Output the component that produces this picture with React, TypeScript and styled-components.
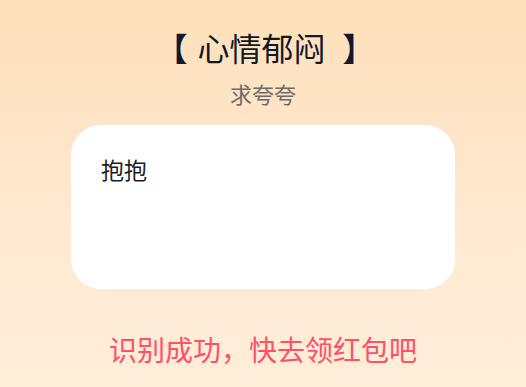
import React from 'react'
import styled, { createGlobalStyle } from 'styled-components'

const GlobalStyle = createGlobalStyle`
  html, body {
    margin: 0;
    padding: 0;
  }
  body {
    font-family: "Noto Sans CJK SC", "Noto Sans", sans-serif;
  }
`

const Page = styled.div`
  width: 526px;
  height: 387px;
  box-sizing: border-box;
  padding-top: 28px;
  background: linear-gradient(180deg, #fee0ba 0%, #ffe9d2 60%, #ffeed9 100%);
  display: flex;
  flex-direction: column;
  align-items: center;
  overflow: hidden;
`

const Title = styled.h1`
  margin: 0;
  display: flex;
  align-items: center;
  font-size: 32px;
  line-height: 38px;
  font-weight: 400;
  color: #111827;
  white-space: pre;
`

const Bracket = styled.span<{ $side: 'left' | 'right' }>`
  font-weight: 700;
  color: #0f1a2e;
  margin-left: ${p => (p.$side === 'left' ? '-10px' : '17px')};
  margin-right: ${p => (p.$side === 'left' ? '10px' : '-14px')};
`

const Subtitle = styled.div`
  margin-top: 13px;
  font-size: 22px;
  line-height: 28px;
  color: #6b6b6b;
`

const Card = styled.div`
  margin-top: 18px;
  width: 384px;
  height: 164px;
  box-sizing: border-box;
  padding: 28px 30px;
  background: #ffffff;
  border-radius: 30px;
`

const CardText = styled.div`
  font-size: 23px;
  line-height: 32px;
  color: #1c1c1c;
`

const Notice = styled.div`
  margin-top: 42px;
  font-size: 28px;
  line-height: 36px;
  color: #ff5068;
`

export default function App() {
  return (
    <>
      <GlobalStyle />
      <Page>
        <Title>
          <Bracket $side="left">【</Bracket>
          心情郁闷
          <Bracket $side="right">】</Bracket>
        </Title>
        <Subtitle>求夸夸</Subtitle>
        <Card>
          <CardText>抱抱</CardText>
        </Card>
        <Notice>识别成功，快去领红包吧</Notice>
      </Page>
    </>
  )
}
